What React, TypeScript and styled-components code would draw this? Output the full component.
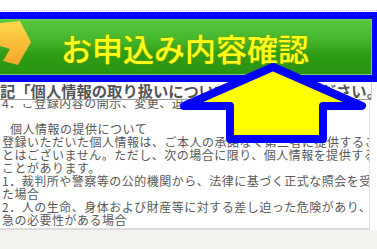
import React from "react";
import styled, { createGlobalStyle } from "styled-components";

const GlobalStyle = createGlobalStyle`
  html, body { margin: 0; padding: 0; background: #ffffff; overflow: hidden; }
  #root { width: 377px; height: 249px; }
`;

const Page = styled.div`
  position: relative;
  width: 377px;
  height: 249px;
  overflow: hidden;
  display: flex;
  flex-direction: column;
  background: #ffffff;
  font-family: "Noto Sans CJK JP", "Noto Sans", sans-serif;
`;

const TopStrip = styled.div`
  height: 10px;
  border-bottom: 1px dotted #c4c4c4;
  margin-bottom: 1px;
  flex: none;
`;

const BannerFrame = styled.div`
  background: #0000ff;
  padding: 7px 5px 7px 0;
  flex: none;
`;

const ApplyButton = styled.div`
  height: 56px;
  box-sizing: border-box;
  display: flex;
  align-items: center;
  border: 1px solid #6fd456;
  border-left: none;
  background: linear-gradient(180deg, #58c83e 0%, #43b52a 40%, #2f9d15 62%, #2a9410 100%);
  overflow: hidden;
`;

const ArrowIcon = styled.svg`
  width: 34px;
  height: 56px;
  flex: none;
  margin-top: -2px;
`;

const Label = styled.span`
  margin-left: 27px;
  font-size: 31px;
  line-height: 1;
  color: #ffff1a;
  letter-spacing: 0;
  font-weight: 500;
  text-shadow: 0 0 2px #8a9a00, 0 0 1px #8a9a00;
  white-space: nowrap;
`;

const Heading = styled.div`
  flex: none;
  width: 372px;
  height: 18px;
  box-sizing: border-box;
  border-right: 1px solid #cfcfcf;
  border-bottom: 1px solid #9a9a9a;
  font-size: 15.3px;
  line-height: 17px;
  font-weight: 700;
  color: #555555;
  white-space: nowrap;
  overflow: hidden;
  position: relative;
  z-index: 1;
  background: #ffffff;
`;

const TextBox = styled.div`
  flex: none;
  width: 370px;
  height: 130px;
  overflow: hidden;
  border-right: 1px solid #e2e2e2;
  border-bottom: 2px solid #dcdcdc;
  box-sizing: border-box;
`;

const TextInner = styled.div`
  margin-top: -4px;
  padding-left: 2px;
  font-size: 12px;
  letter-spacing: 0.5px;
  line-height: 13px;
  color: #585858;
`;

const Line = styled.div<{ $indent?: number }>`
  height: 13px;
  white-space: nowrap;
  padding-left: ${(p) => p.$indent ?? 0}px;
`;

const Footer = styled.div`
  flex: 1;
  background: #f4f2ee;
`;

const Overlay = styled.svg`
  position: absolute;
  left: 0;
  top: 0;
  width: 377px;
  height: 249px;
  pointer-events: none;
  z-index: 5;
`;

const lines: { text: string; indent?: number }[] = [
  { text: "4．ご登録内容の開示、変更、退会について" },
  { text: "" },
  { text: "個人情報の提供について", indent: 8 },
  { text: "登録いただいた個人情報は、ご本人の承諾なく第三者に提供するこ" },
  { text: "とはございません。ただし、次の場合に限り、個人情報を提供する" },
  { text: "ことがあります。" },
  { text: "1．裁判所や警察等の公的機関から、法律に基づく正式な照会を受け" },
  { text: "た場合" },
  { text: "2．人の生命、身体および財産等に対する差し迫った危険があり、緊" },
  { text: "急の必要性がある場合" },
];

export default function App() {
  return (
    <>
      <GlobalStyle />
      <Page>
        <TopStrip />
        <BannerFrame>
          <ApplyButton>
            <ArrowIcon viewBox="0 0 34 56">
              <defs>
                <linearGradient id="ag" x1="0" y1="0" x2="0" y2="1">
                  <stop offset="0" stopColor="#ffd84a" />
                  <stop offset="1" stopColor="#f2a629" />
                </linearGradient>
              </defs>
              <path
                d="M0 5 L20 3 L31 24 L18 47 L3 43 L10 31 L0 28 Z"
                fill="url(#ag)"
              />
            </ArrowIcon>
            <Label>お申込み内容確認</Label>
          </ApplyButton>
        </BannerFrame>
        <Heading>記「個人情報の取り扱いについて」をお読みください。</Heading>
        <TextBox>
          <TextInner>
            {lines.map((l, i) => (
              <Line key={i} $indent={l.indent}>
                {l.text}
              </Line>
            ))}
          </TextInner>
        </TextBox>
        <Footer />
        <Overlay viewBox="0 0 377 249">
          <polygon
            points="273,67 362,106 323,106 323,139 230,139 230,106 184,106"
            fill="#ffff00"
            stroke="#0000ff"
            strokeWidth="8"
            strokeLinejoin="round"
          />
        </Overlay>
      </Page>
    </>
  );
}
